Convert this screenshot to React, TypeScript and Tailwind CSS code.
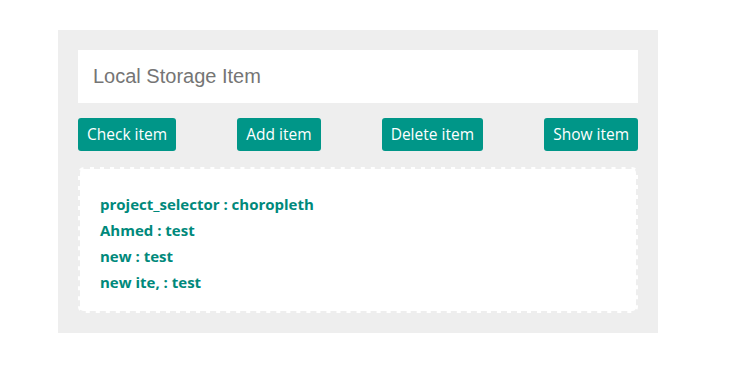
import React from "react";

const items = [
  "project_selector : choropleth",
  "Ahmed : test",
  "new : test",
  "new ite, : test",
];

const buttons = ["Check item", "Add item", "Delete item", "Show item"];

export default function App() {
  return (
    <div className="w-[738px] h-[373px] bg-white pt-[30px] pl-[58px]">
      <div className="w-[600px] h-[303px] bg-[#eeeeee] p-[20px] flex flex-col">
        <input
          className="h-[53px] w-full bg-white px-[15px] text-[20px] outline-none placeholder:text-[#757575]"
          style={{ fontFamily: '"Liberation Sans", Arial, sans-serif' }}
          placeholder="Local Storage Item"
        />
        <div
          className="mt-[15px] flex justify-between"
          style={{ fontFamily: '"Open Sans", "Noto Sans", sans-serif' }}
        >
          {buttons.map((b) => (
            <button
              key={b}
              className="h-[33px] rounded-[3px] bg-[#009688] px-[9px] text-[15.5px] text-white"
            >
              {b}
            </button>
          ))}
        </div>
        <div
          className="mt-[16px] h-[146px] rounded-[6px] border-2 border-dashed border-[#eeeeee] bg-white pl-[20px] pt-[22px]"
          style={{ fontFamily: '"Open Sans", "Noto Sans", sans-serif' }}
        >
          {items.map((t) => (
            <div key={t} className="h-[26px] text-[15px] font-bold leading-[26px] text-[#00897b]">
              {t}
            </div>
          ))}
        </div>
      </div>
    </div>
  );
}
